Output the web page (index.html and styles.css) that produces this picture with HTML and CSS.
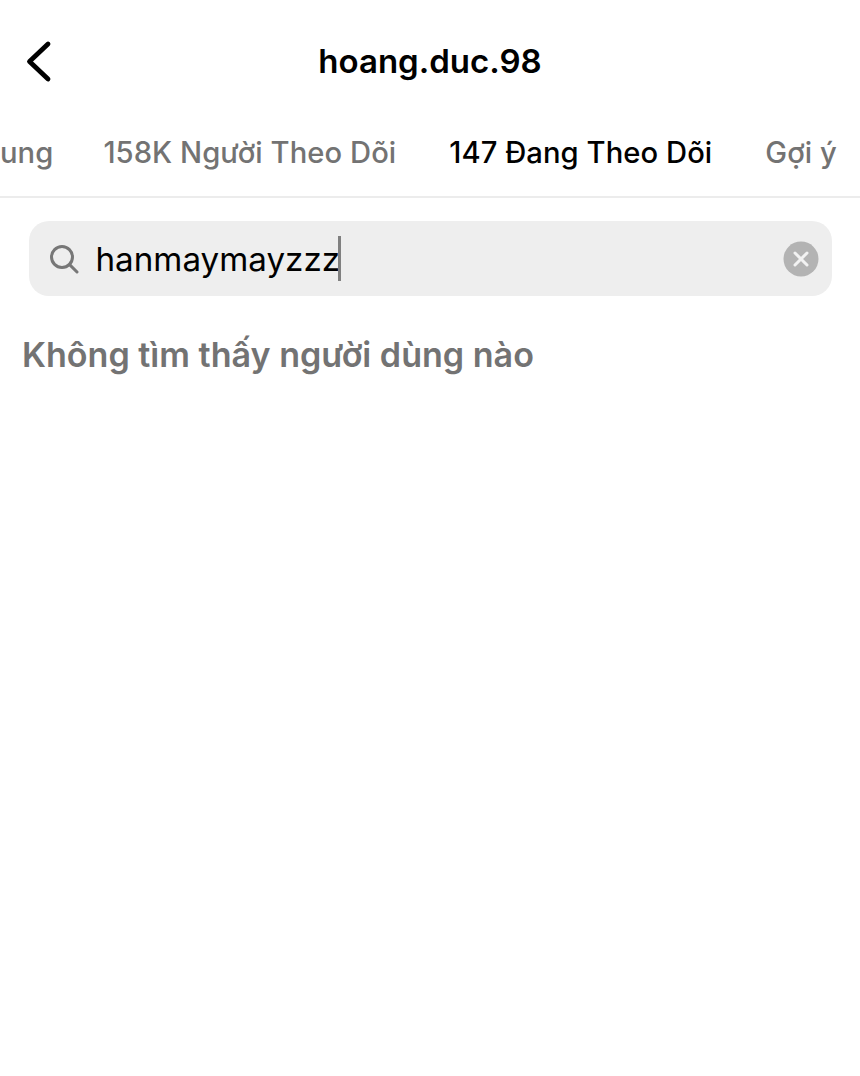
FILE: index.html
```html
<!DOCTYPE html>
<html lang="vi">
<head>
<meta charset="utf-8">
<title>hoang.duc.98</title>
<link rel="stylesheet" href="styles.css">
</head>
<body>
<main class="screen">
  <header class="topbar">
    <svg class="back" width="30" height="44" viewBox="0 0 30 44"><path d="M25 5 L6.5 22.5 L25 40" fill="none" stroke="#000" stroke-width="4.8" stroke-linecap="round" stroke-linejoin="round"/></svg>
    <h1 class="title">hoang.duc.98</h1>
  </header>
  <nav class="tabs">
    <div class="tab tab-first">ung</div>
    <div class="tab">158K Người Theo Dõi</div>
    <div class="tab active">147 Đang Theo Dõi</div>
    <div class="tab">Gợi ý</div>
  </nav>
  <div class="search">
    <svg class="search-icon" width="30" height="30" viewBox="0 0 30 30"><circle cx="13" cy="13" r="10.5" fill="none" stroke="#777" stroke-width="3"/><path d="M20.6 20.6 L28 28" stroke="#777" stroke-width="3" stroke-linecap="round"/></svg>
    <span class="query">hanmaymayzzz</span><span class="caret"></span>
    <svg class="clear" width="36" height="36" viewBox="0 0 36 36"><circle cx="18" cy="18" r="17.5" fill="#b3b3b3"/><path d="M12 12 L24 24 M24 12 L12 24" stroke="#f2f2f2" stroke-width="3" stroke-linecap="round"/></svg>
  </div>
  <p class="empty">Không tìm thấy người dùng nào</p>
</main>
</body>
</html>
```
FILE: styles.css
```css
html, body {
  margin: 0;
  padding: 0;
  background: #fff;
}
body {
  font-family: Inter, "Liberation Sans", sans-serif;
}
.screen {
  width: 860px;
  height: 1076px;
  overflow: hidden;
}
.topbar {
  height: 122px;
  position: relative;
  display: flex;
  justify-content: center;
  align-items: center;
}
.back {
  position: absolute;
  left: 23px;
  top: 39px;
}
.title {
  margin: 0;
  font-size: 33px;
  font-weight: 600;
  color: #000;
}
.tabs {
  display: flex;
  height: 74px;
  border-bottom: 2px solid #ececec;
  overflow: hidden;
}
.tab {
  flex: none;
  padding: 0 26.5px;
  margin-bottom: -2px;
  font-size: 29.2px;
  font-weight: 500;
  letter-spacing: 0.06px;
  line-height: 61px;
  color: #737373;
  border-bottom: 2px solid transparent;
  white-space: nowrap;
}
.tab-first {
  padding-left: 0;
  padding-right: 23.5px;
}
.tab.active {
  color: #000;
  border-bottom-color: #000;
}
.search {
  display: flex;
  align-items: center;
  height: 75px;
  margin: 23px 28px 0 29px;
  padding: 0 13px 0 20px;
  border-radius: 20px;
  background: #eeeeee;
}
.search-icon {
  flex: none;
}
.query {
  margin-left: 16.5px;
  font-size: 33.2px;
  color: #000;
}
.caret {
  width: 3px;
  height: 45px;
  margin-left: -2px;
  background: #808080;
}
.clear {
  flex: none;
  margin-left: auto;
}
.empty {
  margin: 38px 0 0 22px;
  font-size: 34.1px;
  font-weight: 600;
  color: #737373;
}
```
